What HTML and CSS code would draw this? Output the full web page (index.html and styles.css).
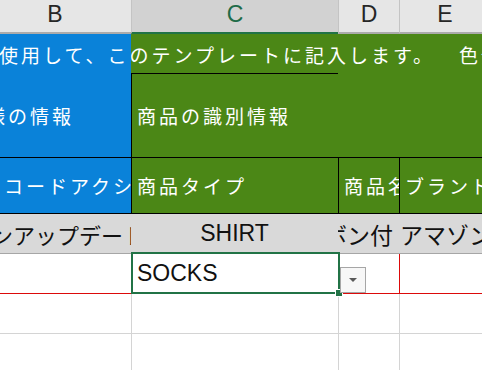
FILE: index.html
```html
<!DOCTYPE html>
<html lang="ja">
<head>
<meta charset="utf-8">
<title>Sheet</title>
<link rel="stylesheet" href="styles.css">
</head>
<body>
<div class="sheet">
  <div class="row hdr">
    <div class="cell b"><span class="colname">B</span></div>
    <div class="cell c selcol"><span class="colname">C</span></div>
    <div class="cell d"><span class="colname">D</span></div>
    <div class="cell e"><span class="colname">E</span></div>
  </div>
  <div class="row r1">
    <div class="cell b blue spill"><span class="wt t1">を使用して、このテンプレートに記入します。　&nbsp;&#8202;色分けされた行</span></div>
    <div class="cell c green"></div>
    <div class="cell d green"></div>
    <div class="cell e green"></div>
  </div>
  <div class="row r2">
    <div class="cell b blue"><span class="wt t2">出品者様の情報</span></div>
    <div class="cell c green"><span class="wt">商品の識別情報</span></div>
    <div class="cell d green"></div>
    <div class="cell e green"></div>
  </div>
  <div class="row r3">
    <div class="cell b blue"><span class="wt">コードアクション</span></div>
    <div class="cell c green"><span class="wt">商品タイプ</span></div>
    <div class="cell d green"><span class="wt">商品名</span></div>
    <div class="cell e green"><span class="wt">ブランド名</span></div>
  </div>
  <div class="row r4">
    <div class="cell b right"><span class="jp t4b">デザインアップデート</span></div>
    <div class="cell c center"><span class="lat">SHIRT</span></div>
    <div class="cell d right"><span class="jp t4d">リボン付</span></div>
    <div class="cell e"><span class="jp t4e">アマゾン</span></div>
  </div>
  <div class="row r5">
    <div class="cell b"></div>
    <div class="cell c active">
      <span class="lat">SOCKS</span>
      <div class="selbox"></div>
      <div class="handle"></div>
      <div class="dropdown"><span class="tri"></span></div>
    </div>
    <div class="cell d"></div>
    <div class="cell e"></div>
  </div>
  <div class="row r6">
    <div class="cell b"></div>
    <div class="cell c"></div>
    <div class="cell d"></div>
    <div class="cell e"></div>
  </div>
  <div class="row r7">
    <div class="cell b"></div>
    <div class="cell c"></div>
    <div class="cell d"></div>
    <div class="cell e"></div>
  </div>
</div>
</body>
</html>
```

FILE: styles.css
```css
html, body {
  margin: 0;
  padding: 0;
  background: #ffffff;
}

.sheet {
  width: 482px;
  height: 370px;
  overflow: hidden;
  font-family: "Noto Sans CJK JP", "Noto Sans", sans-serif;
}

.row {
  display: flex;
}

.cell {
  box-sizing: border-box;
  flex: none;
  display: flex;
  align-items: center;
  overflow: hidden;
  white-space: nowrap;
}

.b { width: 131px; }
.c { width: 207px; }
.d { width: 61px; }
.e { width: 83px; }

/* column header */
.hdr .cell {
  height: 34px;
  background: #e6e6e6;
  border-bottom: 2px solid #ababab;
  justify-content: center;
  padding-bottom: 3px;
}
.hdr .c, .hdr .d, .hdr .e {
  border-left: 1px solid #c4c4c4;
}
.hdr .b { padding-right: 21px; }
.hdr .e { padding-left: 8px; }
.hdr .selcol {
  background: #d2d2d2;
  border-bottom-color: #217346;
}
.colname {
  font-family: "Liberation Sans", Arial, sans-serif;
  font-size: 23px;
  color: #262626;
}
.selcol .colname { color: #1e6b48; }

/* colored header rows */
.blue { background: #0a82d9; }
.green { background: #4b8716; }

.wt {
  font-family: "Noto Sans CJK JP", sans-serif;
  font-size: 19px;
  letter-spacing: 3px;
  color: #ffffff;
}

.r1 .cell { height: 40px; }
.r1 .c { border-bottom: 1px solid #000; }
.spill {
  position: relative;
  z-index: 1;
  overflow: visible;
}
.t1 { margin-left: -23px; }

.r2 .cell {
  height: 84px;
  border-bottom: 1px solid #000;
}
.r2 .c { border-left: 1px solid #000; padding-left: 5px; }
.t2 { margin-left: -80px; }

.r3 .cell {
  height: 56px;
  border-bottom: 1px solid #000;
  padding-left: 5px;
}
.r3 .b { padding-left: 4px; }
.r3 .c, .r3 .d, .r3 .e { border-left: 1px solid #000; }

/* gray row */
.r4 .cell {
  height: 40px;
  background: #d9d9d9;
  border-bottom: 1px solid #a6a6a6;
}
.right { justify-content: flex-end; }
.center { justify-content: center; }
.jp {
  font-family: "Noto Sans CJK JP", sans-serif;
  font-size: 22px;
  color: #111;
}
.lat {
  font-family: "Liberation Sans", Arial, sans-serif;
  font-size: 23px;
  color: #111;
}
.t4b { margin-right: -14px; }
.t4d { font-size: 23px; padding-right: 6px; }
.t4e { font-size: 23px; padding-left: 1px; }

/* white grid rows */
.r5 .cell, .r6 .cell, .r7 .cell {
  height: 40px;
  border-bottom: 1px solid #d4d4d4;
}
.r5 .c, .r5 .d, .r6 .c, .r6 .d, .r6 .e, .r7 .c, .r7 .d, .r7 .e {
  border-left: 1px solid #d4d4d4;
}
.r5 .b, .r5 .d, .r5 .e { border-bottom-color: #dc0a0a; }
.r5 .e { border-left: 1px solid #dc0a0a; }

.active {
  position: relative;
  overflow: visible;
  padding-left: 5px;
}
.selbox {
  position: absolute;
  left: -1px;
  top: -2px;
  right: -2px;
  bottom: -1px;
  border: 2px solid #217346;
}
.handle {
  position: absolute;
  left: 204px;
  top: 36px;
  width: 6px;
  height: 6px;
  background: #217346;
  outline: 1px solid #ffffff;
}
.dropdown {
  position: absolute;
  left: 208px;
  top: 13px;
  width: 26px;
  height: 26px;
  box-sizing: border-box;
  border: 1px solid #a6a6a6;
  background: #f7f7f7;
  display: flex;
  align-items: center;
  justify-content: center;
}
.tri {
  width: 0;
  height: 0;
  border-left: 4px solid transparent;
  border-right: 4px solid transparent;
  border-top: 4px solid #595959;
}
```
